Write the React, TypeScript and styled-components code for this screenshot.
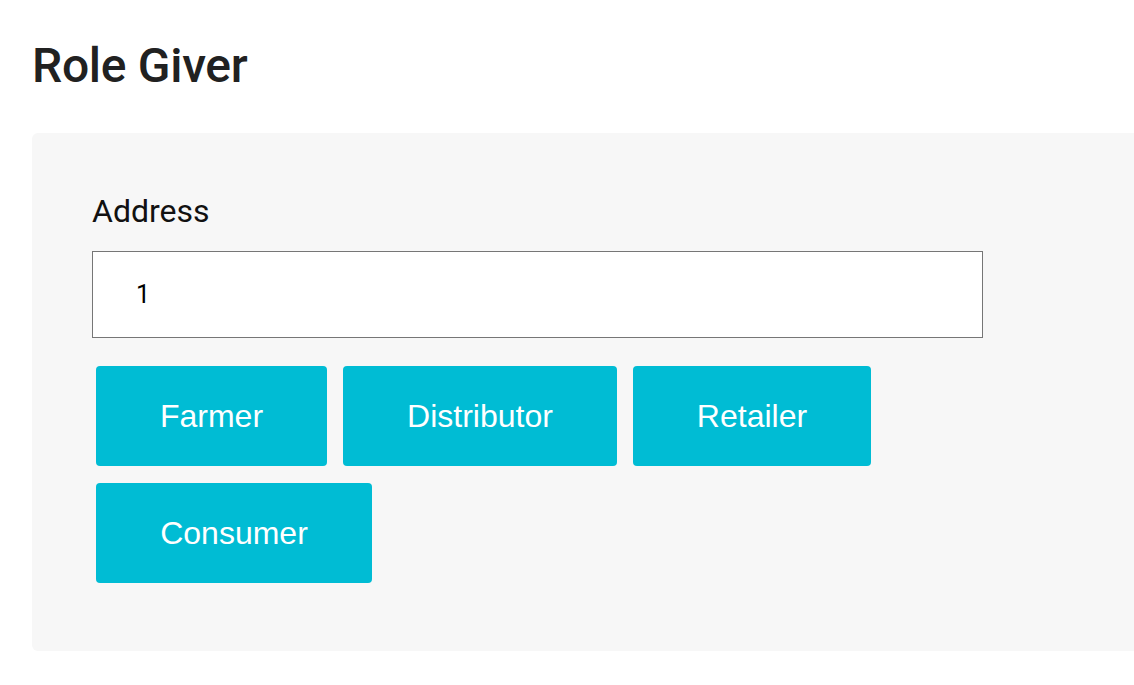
import React from "react";
import styled, { createGlobalStyle } from "styled-components";

const Global = createGlobalStyle`
  html, body { margin: 0; padding: 0; background: #ffffff; overflow: hidden; }
  * { box-sizing: border-box; }
`;

const Page = styled.div`
  padding: 38px 0 0 32px;
  font-family: Roboto, "Liberation Sans", sans-serif;
`;

const Title = styled.h1`
  margin: 0;
  font-family: Roboto, sans-serif;
  font-weight: 500;
  font-size: 48px;
  line-height: 56px;
  color: #212121;
  letter-spacing: -0.3px;
`;

const Panel = styled.section`
  margin-top: 39px;
  margin-right: -20px;
  background: #f7f7f7;
  border-radius: 6px;
  padding: 61px 60px 68px 60px;
`;

const Label = styled.label`
  display: block;
  font-family: Roboto, sans-serif;
  font-size: 32px;
  line-height: 35px;
  color: #111111;
`;

const Input = styled.input`
  display: block;
  margin-top: 22px;
  width: 891px;
  height: 87px;
  border: 1px solid #767676;
  border-radius: 0;
  background: #ffffff;
  padding: 0 0 0 43px;
  font-family: Roboto, "Liberation Sans", sans-serif;
  font-size: 25px;
  color: #000000;
  outline: none;
`;

const Buttons = styled.div`
  display: flex;
  flex-wrap: wrap;
  gap: 17px 16px;
  margin-top: 28px;
  padding-left: 4px;
  width: 900px;
`;

const RoleButton = styled.button<{ $w: number }>`
  width: ${(p) => p.$w}px;
  height: 100px;
  border: none;
  border-radius: 4px;
  background: #00bcd4;
  color: #ffffff;
  font-family: "Liberation Sans", Arial, sans-serif;
  font-size: 32px;
  padding: 0;
  cursor: pointer;
`;

const roles: [string, number][] = [
  ["Farmer", 231],
  ["Distributor", 274],
  ["Retailer", 238],
  ["Consumer", 276],
];

export default function App() {
  return (
    <Page>
      <Global />
      <Title>Role Giver</Title>
      <Panel>
        <Label htmlFor="addr">Address</Label>
        <Input id="addr" defaultValue="1" />
        <Buttons>
          {roles.map(([r, w]) => (
            <RoleButton key={r} $w={w}>
              {r}
            </RoleButton>
          ))}
        </Buttons>
      </Panel>
    </Page>
  );
}
